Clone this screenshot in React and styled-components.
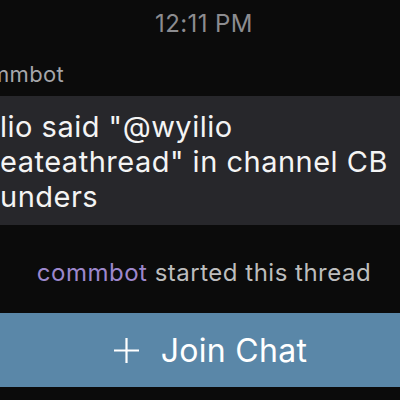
import React from 'react';
import styled, { createGlobalStyle } from 'styled-components';

const GlobalStyle = createGlobalStyle`
  html, body {
    margin: 0;
    padding: 0;
    background: #0b0b0b;
  }
  body {
    font-family: Inter, "Liberation Sans", Arial, sans-serif;
    -webkit-font-smoothing: antialiased;
  }
`;

const Screen = styled.div`
  width: 400px;
  height: 400px;
  overflow: hidden;
  background: #0b0b0b;
  display: flex;
  flex-direction: column;
`;

const TimeStamp = styled.div`
  padding: 10px 0 0 8px;
  font-size: 24px;
  line-height: 28px;
  letter-spacing: 0.4px;
  color: #8c8c90;
  text-align: center;
`;

const SenderName = styled.div`
  margin: 22px 0 0 -10px;
  font-size: 22px;
  line-height: 28px;
  letter-spacing: 0.3px;
  color: #a6a6aa;
`;

const Bubble = styled.div`
  margin-top: 8px;
  background: #27272b;
  padding: 13px 0 11px 0;
  font-size: 29px;
  line-height: 35px;
  letter-spacing: 0.5px;
  color: #f4f4f4;
  white-space: pre;
`;

const ThreadNote = styled.div`
  margin-top: 33px;
  padding-left: 8px;
  font-size: 24px;
  line-height: 30px;
  letter-spacing: 0.5px;
  color: #bdbdbd;
  text-align: center;
`;

const Username = styled.span`
  color: ${(p) => p.color || '#9d87cc'};
`;

const JoinButton = styled.button`
  margin-top: 25px;
  height: 74px;
  width: 100%;
  border: none;
  padding: 0 0 0 20px;
  background: #5a87a8;
  color: #ffffff;
  font-family: inherit;
  font-size: 32px;
  letter-spacing: 0.3px;
  display: flex;
  align-items: center;
  justify-content: center;
  gap: 21px;
  flex-shrink: 0;
`;

const PlusIcon = () => (
  <svg width="27" height="27" viewBox="0 0 27 27" fill="none">
    <path d="M13.5 1v25M1 13.5h25" stroke="#fff" strokeWidth="2.2" />
  </svg>
);

const App = () => {
  return (
    <Screen>
      <GlobalStyle />
      <TimeStamp>12:11 PM</TimeStamp>
      <SenderName>mmbot</SenderName>
      <Bubble>
        {'lio said "@wyilio\neateathread" in channel CB\nunders'}
      </Bubble>
      <ThreadNote>
        <Username>commbot</Username> started this thread
      </ThreadNote>
      <JoinButton type="button">
        <PlusIcon />
        <span>Join Chat</span>
      </JoinButton>
    </Screen>
  );
};

export default App;
